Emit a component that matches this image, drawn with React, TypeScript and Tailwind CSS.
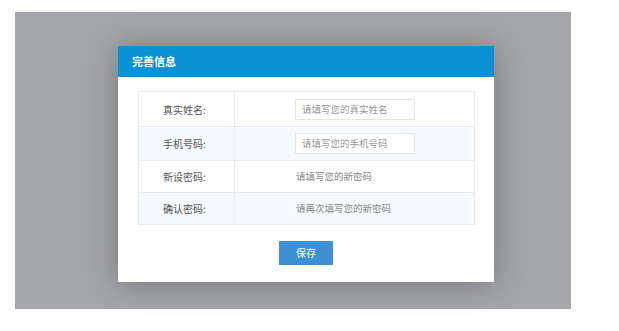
export default function App() {
  const rows = [
    { label: '真实姓名:', value: '请填写您的真实姓名', input: true },
    { label: '手机号码:', value: '请填写您的手机号码', input: true },
    { label: '新设密码:', value: '请填写您的新密码', input: false },
    { label: '确认密码:', value: '请再次填写您的新密码', input: false },
  ];

  return (
    <div
      className="w-[619px] h-[331px] bg-white pt-[12px] pl-[15px]"
      style={{ fontFamily: '"Noto Sans CJK SC", "Liberation Sans", sans-serif' }}
    >
      <div className="w-[556px] h-[297px] bg-[#a5a6a9] pt-[34px] pl-[103px]">
        <div className="w-[376px] h-[236px] bg-white shadow-[0_2px_30px_rgba(0,0,0,0.3)]">
          {/* header */}
          <div className="h-[31px] bg-[#0a90d5] flex items-center pl-[14px]">
            <span className="text-white text-[11px] font-bold">完善信息</span>
          </div>

          <div className="pt-[14px] pl-[20px]">
            <div className="w-[337px] border border-[#e6ebef]">
              {rows.map((r, i) => (
                <div
                  key={r.label}
                  className={`flex ${i % 2 === 1 ? 'bg-[#f4fafd]' : 'bg-white'} ${i > 0 ? 'border-t border-[#e6ebef]' : ''} ${i < 2 ? 'h-[34px]' : 'h-[32px]'}`}
                >
                  <div className="w-[96px] border-r border-[#e6ebef] flex items-center pl-[24px] text-[10px] text-[#555]">
                    {r.label}
                  </div>
                  <div className="flex-1 flex items-center pl-[60px]">
                    {r.input ? (
                      <div className="w-[120px] h-[21px] border border-[#e3e6e9] bg-white flex items-center pl-[6px] text-[9.5px] text-[#999]">
                        {r.value}
                      </div>
                    ) : (
                      <span className="pl-[1px] text-[9.5px] text-[#888]">{r.value}</span>
                    )}
                  </div>
                </div>
              ))}
            </div>
          </div>

          <div className="pt-[13px] pl-[161px]">
            <button className="w-[54px] h-[24px] bg-[#3d8fd6] text-white text-[10px]">
              保存
            </button>
          </div>
        </div>
      </div>
    </div>
  );
}
